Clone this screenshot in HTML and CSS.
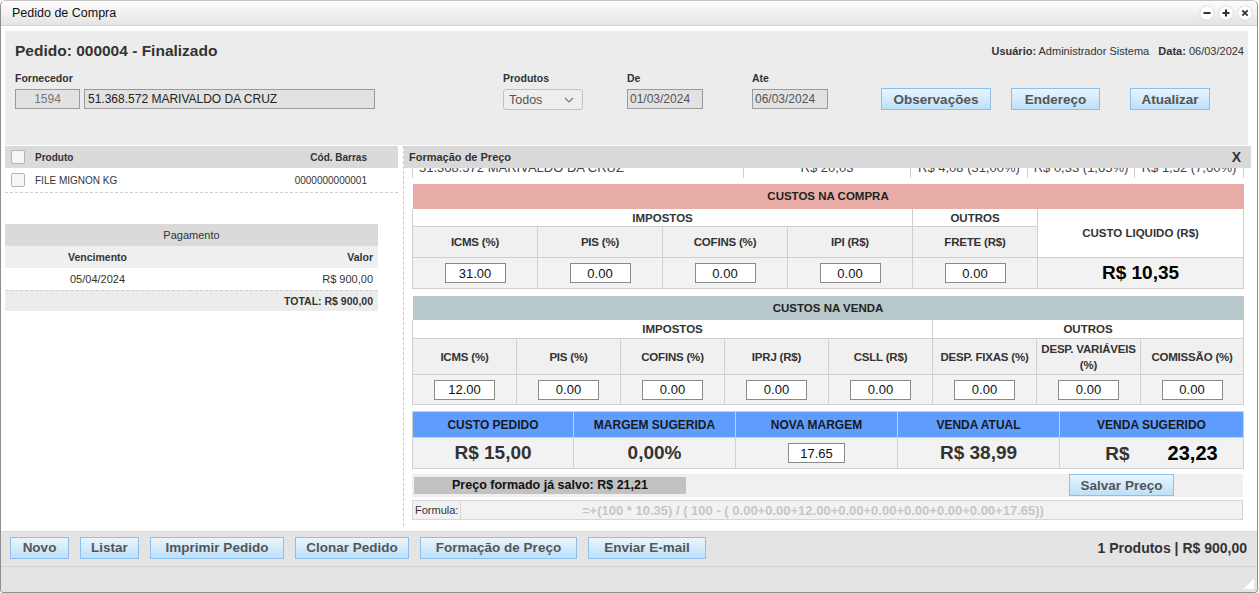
FILE: index.html
```html
<!DOCTYPE html>
<html lang="pt-BR">
<head>
  <meta charset="UTF-8">
  <title>Pedido de Compra</title>
  <link rel="stylesheet" href="styles.css">
</head>
<body>
<div class="window">

  <div class="titlebar">
    <span class="title">Pedido de Compra</span>
    <div class="controls">
      <span class="ctl"><svg width="14" height="14" viewBox="0 0 14 14"><path d="M3.5 7h7" stroke="#333" stroke-width="2"/></svg></span>
      <span class="ctl"><svg width="14" height="14" viewBox="0 0 14 14"><path d="M3.5 7h7M7 3.5v7" stroke="#333" stroke-width="2"/></svg></span>
      <span class="ctl"><svg width="14" height="14" viewBox="0 0 14 14"><path d="M4.3 4.3l5.4 5.4M9.7 4.3l-5.4 5.4" stroke="#333" stroke-width="1.8"/></svg></span>
    </div>
  </div>

  <div class="content">
    <div class="header-panel">
      <div class="head-row">
        <h1>Pedido: 000004 - Finalizado</h1>
        <div class="user-info"><b>Usuário:</b> Administrador Sistema &nbsp; <b>Data:</b> 06/03/2024</div>
      </div>
      <div class="filters">
        <div class="field fornecedor">
          <label>Fornecedor</label>
          <div class="inline">
            <input class="box code" value="1594" readonly>
            <input class="box name" value="51.368.572 MARIVALDO DA CRUZ" readonly>
          </div>
        </div>
        <div class="field produtos">
          <label>Produtos</label>
          <div class="select">
            <span>Todos</span>
            <svg width="10" height="6" viewBox="0 0 10 6"><path d="M1 1l4 4 4-4" fill="none" stroke="#777" stroke-width="1.2"/></svg>
          </div>
        </div>
        <div class="field de">
          <label>De</label>
          <input class="box date" value="01/03/2024" readonly>
        </div>
        <div class="field ate">
          <label>Ate</label>
          <input class="box date" value="06/03/2024" readonly>
        </div>
        <div class="actions">
          <button class="btn obs">Observações</button>
          <button class="btn end">Endereço</button>
          <button class="btn atu">Atualizar</button>
        </div>
      </div>
    </div>

    <div class="main">
      <div class="left">
        <div class="list-head">
          <span class="check"></span>
          <span class="col-prod">Produto</span>
          <span class="col-cod">Cód. Barras</span>
        </div>
        <div class="list-row">
          <span class="check"></span>
          <span class="col-prod">FILE MIGNON KG</span>
          <span class="col-cod">0000000000001</span>
        </div>

        <table class="pagamento">
          <tr class="pg-title"><td colspan="2">Pagamento</td></tr>
          <tr class="pg-head"><td class="venc">Vencimento</td><td class="valor">Valor</td></tr>
          <tr class="pg-row"><td class="venc">05/04/2024</td><td class="valor">R$ 900,00</td></tr>
          <tr class="pg-total"><td colspan="2" class="valor">TOTAL: R$ 900,00</td></tr>
        </table>
      </div>

      <div class="right">
        <div class="panel-head">
          <span>Formação de Preço</span>
          <span class="close">X</span>
        </div>
        <div class="panel-body">
          <div class="clip">
            <table class="grid prev">
              <colgroup><col class="c1"><col class="c2"><col class="c3"><col class="c4"><col class="c5"></colgroup>
              <tr>
                <td class="l">51.368.572 MARIVALDO DA CRUZ</td>
                <td>R$ 20,03</td>
                <td>R$ 4,08 (31,00%)</td>
                <td>R$ 0,33 (1,65%)</td>
                <td>R$ 1,52 (7,60%)</td>
              </tr>
            </table>
          </div>

          <table class="grid compra">
            <colgroup><col><col><col><col><col><col class="liq"></colgroup>
            <tr class="band salmon"><td colspan="6">CUSTOS NA COMPRA</td></tr>
            <tr class="group">
              <td colspan="4">IMPOSTOS</td>
              <td>OUTROS</td>
              <td rowspan="2" class="liq-head">CUSTO LIQUIDO (R$)</td>
            </tr>
            <tr class="head">
              <th>ICMS (%)</th><th>PIS (%)</th><th>COFINS (%)</th><th>IPI (R$)</th><th>FRETE (R$)</th>
            </tr>
            <tr class="inputs">
              <td><input class="num" value="31.00"></td>
              <td><input class="num" value="0.00"></td>
              <td><input class="num" value="0.00"></td>
              <td><input class="num" value="0.00"></td>
              <td><input class="num" value="0.00"></td>
              <td class="big black">R$ 10,35</td>
            </tr>
          </table>

          <table class="grid venda">
            <colgroup><col><col><col><col><col><col><col><col class="last"></colgroup>
            <tr class="band slate"><td colspan="8">CUSTOS NA VENDA</td></tr>
            <tr class="group">
              <td colspan="5">IMPOSTOS</td>
              <td colspan="3">OUTROS</td>
            </tr>
            <tr class="head tall">
              <th>ICMS (%)</th><th>PIS (%)</th><th>COFINS (%)</th><th>IPRJ (R$)</th><th>CSLL (R$)</th>
              <th class="nowrap">DESP. FIXAS (%)</th><th>DESP. VARIÁVEIS (%)</th><th class="nowrap">COMISSÃO (%)</th>
            </tr>
            <tr class="inputs short">
              <td><input class="num" value="12.00"></td>
              <td><input class="num" value="0.00"></td>
              <td><input class="num" value="0.00"></td>
              <td><input class="num" value="0.00"></td>
              <td><input class="num" value="0.00"></td>
              <td><input class="num" value="0.00"></td>
              <td><input class="num" value="0.00"></td>
              <td><input class="num" value="0.00"></td>
            </tr>
          </table>

          <table class="grid resumo">
            <colgroup><col class="r1"><col><col><col><col class="r5"></colgroup>
            <tr class="blue-head">
              <th>CUSTO PEDIDO</th><th>MARGEM SUGERIDA</th><th>NOVA MARGEM</th><th>VENDA ATUAL</th><th>VENDA SUGERIDO</th>
            </tr>
            <tr class="inputs">
              <td class="big">R$ 15,00</td>
              <td class="big">0,00%</td>
              <td><input class="num margem" value="17.65"></td>
              <td class="big">R$ 38,99</td>
              <td class="big sugerido"><span class="cur">R$</span><span class="black">23,23</span></td>
            </tr>
          </table>

          <div class="saved-row">
            <div class="saved-price">Preço formado já salvo: R$ 21,21</div>
            <button class="btn salvar">Salvar Preço</button>
          </div>

          <div class="formula">
            <span class="formula-label">Formula:</span>
            <input class="formula-text" value="=+(100 * 10.35) / ( 100 - ( 0.00+0.00+12.00+0.00+0.00+0.00+0.00+0.00+17.65))" readonly>
          </div>
        </div>
      </div>
    </div>
  </div>

  <div class="toolbar">
    <div class="tb-buttons">
      <button class="btn">Novo</button>
      <button class="btn">Listar</button>
      <button class="btn">Imprimir Pedido</button>
      <button class="btn">Clonar Pedido</button>
      <button class="btn">Formação de Preço</button>
      <button class="btn">Enviar E-mail</button>
    </div>
    <div class="summary">1 Produtos | R$ 900,00</div>
  </div>
  <div class="statusbar">
    <svg class="grip" width="12" height="12" viewBox="0 0 12 12"><path d="M12 0v12H0z" fill="#fff"/><path d="M11.5 1L1 11.5" stroke="#d0d0d0"/></svg>
  </div>
</div>
</body>
</html>
```

FILE: styles.css
```css
* {
  box-sizing: border-box;
}
body {
  margin: 0;
  font-family: "Liberation Sans", Arial, sans-serif;
  background: #fff;
  color: #333;
}
.window {
  width: 1258px;
  height: 593px;
  border: 1px solid #8e8e8e;
  border-top-color: #c4c4c4;
  border-radius: 6px 6px 4px 4px;
  display: flex;
  flex-direction: column;
  overflow: hidden;
  background: #fff;
}

/* title bar */
.titlebar {
  height: 25px;
  flex: none;
  display: flex;
  align-items: center;
  justify-content: space-between;
  padding: 0 5px 0 11px;
  background: linear-gradient(#fdfdfd, #e4e4e4);
  border-bottom: 1px solid #d4d4d4;
}
.title {
  font-size: 12.5px;
  color: #111;
}
.controls {
  display: flex;
  gap: 5px;
}
.ctl {
  width: 14px;
  height: 14px;
  border-radius: 50%;
  background: #fff;
  box-shadow: 0 0 1px #999;
  display: flex;
}

/* content */
.content {
  height: 505px;
  flex: none;
  padding: 5px 0 0 4px;
  display: flex;
  flex-direction: column;
}
.header-panel {
  height: 114px;
  flex: none;
  margin-right: 9px;
  background: #ececec;
  padding: 10px 4px 0 10px;
}
.head-row {
  display: flex;
  justify-content: space-between;
  align-items: center;
  height: 20px;
}
h1 {
  margin: 0;
  font-size: 15.5px;
  color: #333;
}
.user-info {
  font-size: 11px;
  color: #333;
}
.filters {
  display: flex;
  align-items: flex-end;
  margin-top: 10px;
}
.field label {
  display: block;
  font-size: 10.5px;
  font-weight: bold;
  color: #333;
  height: 14px;
  line-height: 14px;
  margin-bottom: 4px;
}
.inline {
  display: flex;
  gap: 4px;
}
.box {
  height: 20px;
  border: 1px solid #9a9a9a;
  background: #e2e2e2;
  font-family: "Liberation Sans", Arial, sans-serif;
  font-size: 12px;
  color: #222;
  padding: 0 3px;
  outline: none;
}
.code {
  width: 65px;
  text-align: center;
  color: #777;
}
.name {
  width: 291px;
}
.date {
  width: 76px;
  color: #555;
  padding: 0 2px;
}
.produtos {
  margin-left: 128px;
}
.select {
  width: 80px;
  height: 21px;
  border: 1px solid #c2c2c2;
  border-radius: 3px;
  background: #eeeeee;
  display: flex;
  align-items: center;
  justify-content: space-between;
  padding: 0 8px 0 5px;
  font-size: 12.5px;
  color: #555;
  margin-bottom: -1px;
}
.de {
  margin-left: 44px;
}
.ate {
  margin-left: 49px;
}
.actions {
  display: flex;
  margin-left: 53px;
  margin-bottom: -1px;
}
.btn {
  height: 22px;
  border: 1px solid #8cbfe9;
  background: linear-gradient(#e9f5fe, #bde0f9);
  font-family: "Liberation Sans", Arial, sans-serif;
  font-size: 13.5px;
  font-weight: bold;
  color: #555;
  padding: 0;
  cursor: pointer;
}
.obs { width: 110px; }
.end { width: 89px; margin-left: 20px; }
.atu { width: 80px; margin-left: 30px; }

/* main area */
.main {
  flex: 1;
  display: flex;
  padding-top: 1px;
  margin-right: 6px;
}
.left {
  width: 398px;
  flex: none;
  padding-right: 5px;
}
.list-head,
.list-row {
  display: flex;
  align-items: center;
  height: 22px;
  padding: 0 31px 0 6px;
  font-size: 10px;
}
.list-head {
  background: #dadada;
  font-weight: bold;
  color: #333;
}
.list-row {
  height: 25px;
  border-bottom: 1px dashed #cfcfcf;
  color: #333;
}
.check {
  width: 14px;
  height: 14px;
  border: 1px solid #b4b4b4;
  border-radius: 2px;
  background: #f6f6f6;
  margin-right: 10px;
}
.col-prod {
  flex: 1;
}
.pagamento {
  width: 373px;
  margin-top: 31px;
  border-collapse: collapse;
  font-size: 11px;
  color: #333;
}
.pagamento td {
  height: 22px;
  padding: 0 5px;
}
.pg-title td {
  background: #dadada;
  text-align: center;
}
.pg-head td {
  background: #efefef;
  font-weight: bold;
  font-size: 10.5px;
}
.pg-row td {
  border-bottom: 1px dashed #cfcfcf;
}
.pg-total td {
  background: #ececec;
  font-weight: bold;
  font-size: 10.5px;
  height: 21px;
}
.venc {
  width: 185px;
  text-align: center;
}
.valor {
  text-align: right;
}

.right {
  flex: 1;
  border-left: 1px dashed #c8c8c8;
  margin-bottom: 5px;
}
.panel-head {
  height: 22px;
  background: #d9d9d9;
  display: flex;
  align-items: center;
  justify-content: space-between;
  padding: 0 10px 0 5px;
  font-size: 11px;
  font-weight: bold;
  color: #333;
}
.close {
  font-size: 14px;
  color: #333;
}
.panel-body {
  padding: 0 7px 0 8px;
}
.clip {
  height: 10px;
  overflow: hidden;
  margin-bottom: 5px;
}
.grid {
  width: 831px;
  border-collapse: collapse;
  table-layout: fixed;
  font-size: 11.5px;
  color: #333;
}
.grid td,
.grid th {
  border: 1px solid #cfcfcf;
  text-align: center;
  padding: 0;
}
.prev {
  margin-top: -13px;
  font-size: 13px;
  color: #444;
}
.prev td {
  height: 23px;
}
.prev td.l {
  text-align: left;
  padding-left: 6px;
}
.prev .c1 { width: 331px; }
.prev .c2 { width: 167px; }
.prev .c3 { width: 117px; }
.prev .c4 { width: 107px; }
.prev .c5 { width: 109px; }

.band td {
  height: 25px;
  font-weight: bold;
  color: #222;
  border-color: transparent;
}
.salmon td {
  background: #e8ada7;
}
.slate td {
  background: #b8c8cb;
  height: 24px;
}
.group td {
  background: #fff;
  font-weight: bold;
  height: 18px;
}
.venda .group td {
  height: 19px;
}
.head th {
  background: #f0f0f0;
  height: 31px;
  letter-spacing: -0.2px;
}
.head.tall th {
  height: 36px;
  padding: 0 4px;
  line-height: 16px;
}
.nowrap {
  white-space: nowrap;
}
.head.tall th.nowrap {
  padding: 0;
}
.liq-head {
  font-weight: bold;
  background: #fff;
}
.compra col { width: 125px; }
.compra col.liq { width: 206px; }
.venda col { width: 104px; }
.venda col.last { width: 103px; }
.inputs td {
  background: #f2f2f2;
  height: 31px;
}
.inputs.short td {
  height: 30px;
}
.num {
  width: 61px;
  height: 20px;
  border: 1px solid #8a8a8a;
  background: #fff;
  font-family: "Liberation Sans", Arial, sans-serif;
  font-size: 13px;
  color: #111;
  text-align: center;
  padding: 0;
  outline: none;
}
.margem {
  width: 57px;
}
.big {
  font-size: 19px;
  font-weight: bold;
  color: #333;
}
.black {
  color: #000;
}
.compra {
  margin-bottom: 6px;
}
.venda {
  margin-bottom: 6px;
}
.resumo col.r1 { width: 161px; }
.resumo col { width: 162px; }
.resumo col.r5 { width: 184px; }
.blue-head th {
  background: #5e9cfd;
  height: 26px;
  font-size: 12px;
  color: #1a1a1a;
}
.resumo td.sugerido {
  padding-left: 20px;
}
.cur {
  margin-right: 38px;
}
.resumo .black {
  font-size: 20px;
}

.saved-row {
  margin-top: 5px;
  width: 831px;
  height: 23px;
  background: #f0f0f0;
  display: flex;
  align-items: flex-start;
}
.saved-price {
  width: 272px;
  height: 17px;
  margin: 3px 0 0 2px;
  background: #c2c2c2;
  font-size: 12.5px;
  font-weight: bold;
  color: #111;
  text-align: center;
  line-height: 17px;
}
.salvar {
  width: 105px;
  margin-left: auto;
  margin-right: 69px;
}
.formula {
  margin-top: 3px;
  width: 831px;
  height: 20px;
  border: 1px solid #d6d6d6;
  display: flex;
}
.formula-label {
  width: 48px;
  background: #f2f2f2;
  border-right: 1px solid #d6d6d6;
  font-size: 11px;
  color: #333;
  line-height: 18px;
  padding-left: 2px;
}
.formula-text {
  flex: 1;
  border: none;
  background: #f2f2f2;
  font-family: "Liberation Sans", Arial, sans-serif;
  font-size: 13px;
  font-weight: bold;
  color: #c6c6c6;
  text-align: left;
  padding: 0 0 0 121px;
  outline: none;
}

/* bottom */
.toolbar {
  height: 35px;
  flex: none;
  background: #e4e4e4;
  border-top: 1px solid #d8d8d8;
  display: flex;
  align-items: center;
  justify-content: space-between;
  padding: 0 10px 3px 9px;
}
.tb-buttons {
  display: flex;
  gap: 11px;
}
.tb-buttons .btn:nth-child(1) { width: 59px; }
.tb-buttons .btn:nth-child(2) { width: 59px; }
.tb-buttons .btn:nth-child(3) { width: 134px; }
.tb-buttons .btn:nth-child(4) { width: 114px; }
.tb-buttons .btn:nth-child(5) { width: 157px; }
.tb-buttons .btn:nth-child(6) { width: 118px; }
.summary {
  font-size: 14px;
  font-weight: bold;
  color: #333;
}
.statusbar {
  flex: 1;
  background: #e4e4e4;
  border-top: 1px solid #d2d2d2;
  display: flex;
  justify-content: flex-end;
  align-items: flex-end;
  padding: 0 3px 3px 0;
}
```
